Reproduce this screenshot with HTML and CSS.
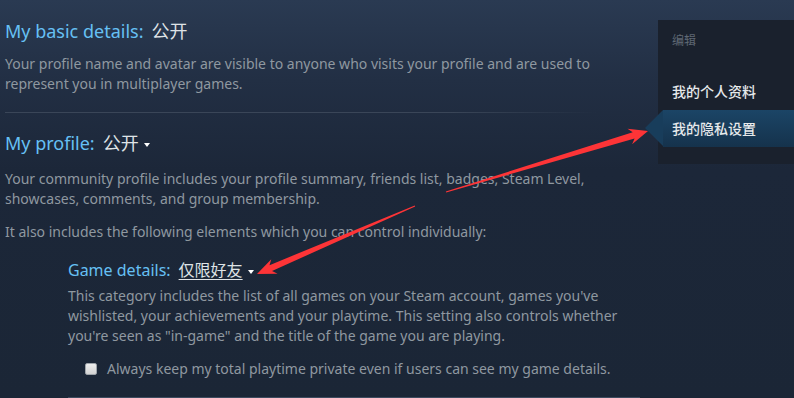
FILE: index.html
```html
<!DOCTYPE html>
<html lang="zh">
<head>
<meta charset="utf-8">
<title>Privacy settings</title>
<link rel="stylesheet" href="styles.css">
</head>
<body>
<div class="page">
  <main class="content">
    <h2 class="setting-title">My basic details:<span class="value">公开</span></h2>
    <p class="desc">Your profile name and avatar are visible to anyone who visits your profile and are used to represent you in multiplayer games.</p>
    <div class="divider"></div>
    <h2 class="setting-title">My profile:<span class="value dropdown">公开<i class="caret"></i></span></h2>
    <p class="desc desc-profile">Your community profile includes your profile summary, friends list, badges, Steam Level, showcases, comments, and group membership.</p>
    <p class="desc desc-also">It also includes the following elements which you can control individually:</p>
    <section class="sub-setting">
      <h3 class="sub-title">Game details:<span class="value dropdown"><u>仅限好友</u><i class="caret"></i></span></h3>
      <p class="desc sub-desc">This category includes the list of all games on your Steam account, games you've wishlisted, your achievements and your playtime. This setting also controls whether you're seen as "in-game" and the title of the game you are playing.</p>
      <label class="check-row"><span class="checkbox"></span><span>Always keep my total playtime private even if users can see my game details.</span></label>
      <div class="next-section"></div>
    </section>
  </main>
  <aside class="sidebar">
    <div class="side-label">编辑</div>
    <div class="side-item">我的个人资料</div>
    <div class="side-item active">我的隐私设置</div>
  </aside>
  <svg class="annotations" width="794" height="398" viewBox="0 0 794 398">
    <g transform="translate(648 131) rotate(-16.8)">
      <polygon points="0,0 -19,-8 -15,-3.2 -211,-0.5 -211,0.5 -15,3.2 -19,8" fill="#fd3437"/>
    </g>
    <g transform="translate(257 274) rotate(156.7)">
      <polygon points="0,0 -19,-8 -15,-3.2 -172,-0.5 -172,0.5 -15,3.2 -19,8" fill="#fd3437"/>
    </g>
  </svg>
</div>
</body>
</html>
```

FILE: styles.css
```css
html, body {
  margin: 0;
  padding: 0;
}
body {
  width: 794px;
  height: 398px;
  overflow: hidden;
  background: linear-gradient(to bottom, #2a3a52 0px, #222f44 80px, #1c2739 170px, #1b2636 398px);
  font-family: "Noto Sans", "Noto Sans CJK SC", sans-serif;
  color: #8f98a0;
}
.page {
  position: relative;
  display: flex;
  width: 794px;
  height: 398px;
}
.content {
  width: 640px;
  padding: 19px 0 0 5px;
  box-sizing: border-box;
  flex: none;
}
.setting-title {
  margin: 0;
  font-size: 18px;
  line-height: 24px;
  font-weight: normal;
  color: #66c0f4;
}
.value {
  margin-left: 8px;
  color: #dfe3e6;
}
.caret {
  display: inline-block;
  width: 0;
  height: 0;
  margin-left: 5px;
  vertical-align: middle;
  border-left: 3.5px solid transparent;
  border-right: 3.5px solid transparent;
  border-top: 4px solid #ffffff;
}
.desc {
  margin: 11px 0 0;
  font-size: 14px;
  line-height: 20px;
}
.divider {
  margin-top: 18px;
  width: 592px;
  height: 1px;
  background: linear-gradient(to right, #3a4658 0%, #3a4658 75%, rgba(58,70,88,0) 100%);
}
.divider + .setting-title {
  margin-top: 18px;
}
.desc-profile {
  margin-top: 14px;
}
.desc-also {
  margin-top: 13px;
}
.sub-setting {
  margin: 17px 0 0 63px;
}
.sub-title {
  margin: 0;
  font-size: 16px;
  line-height: 22px;
  font-weight: normal;
  color: #66c0f4;
}
.sub-title .value u {
  text-decoration: underline;
  text-underline-offset: 3px;
}
.sub-desc {
  margin-top: 5px;
  width: 570px;
}
.check-row {
  display: flex;
  align-items: center;
  gap: 10px;
  margin: 13px 0 0 17px;
  font-size: 14px;
  line-height: 20px;
}
.checkbox {
  width: 10px;
  height: 10px;
  border: 1px solid #9ea4aa;
  border-radius: 2px;
  background: linear-gradient(to bottom, #eeeeee, #d2d2d2);
  flex: none;
}
.next-section {
  margin-top: 18px;
  height: 1px;
  background: #3d4b5f;
}
.sidebar {
  width: 136px;
  margin: 20px 0 0 18px;
  padding: 12px 0 17px;
  align-self: flex-start;
  background: #1a212d;
  font-family: "Noto Sans CJK SC", sans-serif;
  flex: none;
}
.side-label {
  padding-left: 14px;
  font-size: 12px;
  line-height: 16px;
  color: #5f6874;
  margin-bottom: 25px;
}
.side-item {
  position: relative;
  height: 37px;
  line-height: 37px;
  padding-left: 14px;
  font-size: 14px;
  font-weight: 500;
  color: #e6e9eb;
}
.side-item.active {
  margin-left: 5px;
  padding-left: 9px;
  background: linear-gradient(to bottom, #1b4566, #15324c);
}
.side-item.active::before {
  content: "";
  position: absolute;
  left: -18px;
  top: 0;
  width: 0;
  height: 0;
  border-top: 18.5px solid transparent;
  border-bottom: 18.5px solid transparent;
  border-right: 18px solid #183d5b;
}
.annotations {
  position: absolute;
  left: 0;
  top: 0;
  pointer-events: none;
}
```
